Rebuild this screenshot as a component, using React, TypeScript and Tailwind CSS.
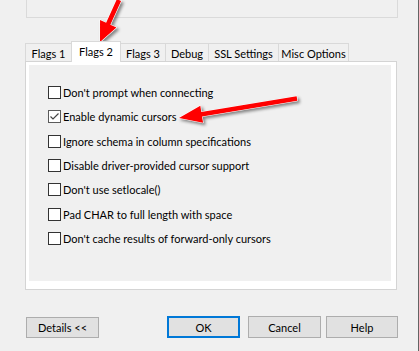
import React from "react";

type Pt = [number, number];

function arrowPoints(T: Pt, P: Pt, s: number, L: number, h: number): string {
  const dx = P[0] - T[0];
  const dy = P[1] - T[1];
  const len = Math.hypot(dx, dy);
  const ux = dx / len;
  const uy = dy / len;
  const nx = -uy;
  const ny = ux;
  const B: Pt = [P[0] - ux * L, P[1] - uy * L];
  const pts: Pt[] = [
    [T[0] + nx * s, T[1] + ny * s],
    [B[0] + nx * s, B[1] + ny * s],
    [B[0] + nx * h, B[1] + ny * h],
    P,
    [B[0] - nx * h, B[1] - ny * h],
    [B[0] - nx * s, B[1] - ny * s],
    [T[0] - nx * s, T[1] - ny * s],
  ];
  return pts.map((p) => `${p[0].toFixed(2)},${p[1].toFixed(2)}`).join(" ");
}

function CheckBox({ checked }: { checked?: boolean }) {
  return (
    <div
      className={
        checked
          ? "w-[13px] h-[13px] border border-[#5a5a5a] bg-white shrink-0 flex items-center justify-center"
          : "w-[13px] h-[13px] border border-[#333333] bg-white shrink-0 flex items-center justify-center"
      }
    >
      {checked && (
        <svg width="11" height="11" viewBox="0 0 11 11">
          <path d="M1.5 5.5 L4 8 L9.5 2.5" fill="none" stroke="#444444" strokeWidth="1.2" />
        </svg>
      )}
    </div>
  );
}

const options: { label: string; checked?: boolean }[] = [
  { label: "Don't prompt when connecting" },
  { label: "Enable dynamic cursors", checked: true },
  { label: "Ignore schema in column specifications" },
  { label: "Disable driver-provided cursor support" },
  { label: "Don't use setlocale()" },
  { label: "Pad CHAR to full length with space" },
  { label: "Don't cache results of forward-only cursors" },
];

export default function App() {
  return (
    <div className="relative w-[419px] h-[351px] bg-[#f0f0f0] overflow-hidden flex font-['Lato',sans-serif] text-[11px] text-black leading-none">
      <div className="flex-1 flex flex-col pl-[25px]">
        {/* top group box remnant */}
        <div className="ml-[1px] w-[372px] h-[18px] border-x border-b border-[#dadada]" />

        {/* tabs */}
        <div className="mt-[23px] h-[20px] flex items-end">
          <div className="w-[47px] h-[18px] border-x border-t border-[#d9d9d9] bg-[#f0f0f0] flex items-center justify-center pt-[1px]">
            Flags 1
          </div>
          <div className="relative z-10 -ml-[1px] -mb-[1px] w-[50px] h-[21px] border-x border-t border-[#d9d9d9] bg-white flex items-center justify-center pb-[2px]">
            Flags 2
          </div>
          <div className="-ml-[1px] w-[46px] h-[18px] border-x border-t border-[#d9d9d9] bg-[#f0f0f0] flex items-center justify-center pt-[1px]">
            Flags 3
          </div>
          <div className="-ml-[1px] w-[44px] h-[18px] border-x border-t border-[#d9d9d9] bg-[#f0f0f0] flex items-center justify-center pt-[1px]">
            Debug
          </div>
          <div className="-ml-[1px] w-[71px] h-[18px] border-x border-t border-[#d9d9d9] bg-[#f0f0f0] flex items-center justify-center pt-[1px]">
            SSL Settings
          </div>
          <div className="-ml-[1px] w-[71px] h-[18px] border-x border-t border-[#d9d9d9] bg-[#f0f0f0] flex items-center justify-center pt-[1px]">
            Misc Options
          </div>
        </div>

        {/* tab page */}
        <div className="w-[372px] h-[229px] border border-[#d4d4d4] bg-white pl-[3px] pt-[3px] pr-[5px] pb-[8px]">
          <div className="h-full bg-[#f0f0f0] pl-[19px] pt-[21px] flex flex-col gap-[11.33px]">
            {options.map((o) => (
              <div key={o.label} className="flex items-center h-[13px]">
                <CheckBox checked={o.checked} />
                <span className="ml-[2px] whitespace-nowrap">{o.label}</span>
              </div>
            ))}
          </div>
        </div>

        {/* buttons */}
        <div className="mt-[26px] flex items-start">
          <div className="ml-[1px] mt-[1px] w-[73px] h-[21px] border border-[#adadad] bg-[#e1e1e1] flex items-center justify-center">
            Details &lt;&lt;
          </div>
          <div className="ml-[68px] w-[73px] h-[22px] border-2 border-[#0078d7] bg-[#e1e1e1] flex items-center justify-center">
            OK
          </div>
          <div className="ml-[8px] w-[73px] h-[22px] border border-[#adadad] bg-[#e1e1e1] flex items-center justify-center">
            Cancel
          </div>
          <div className="ml-[5px] w-[72px] h-[22px] border border-[#adadad] bg-[#e1e1e1] flex items-center justify-center">
            Help
          </div>
        </div>
      </div>
      <div className="w-[1px] h-full bg-[#646464]" />

      {/* red annotation arrows */}
      <svg
        className="absolute inset-0 pointer-events-none drop-shadow-[2px_2px_1.5px_rgba(0,0,0,0.45)]"
        width="419"
        height="351"
        viewBox="0 0 419 351"
      >
        <polygon
          points={arrowPoints([119, 0], [100, 42], 2.3, 20, 9)}
          fill="#ff0000"
          stroke="#ffffff"
          strokeWidth="1.2"
          strokeLinejoin="round"
          paintOrder="stroke"
        />
        <polygon
          points={arrowPoints([297, 98.5], [179, 118], 2.3, 23, 8.5)}
          fill="#ff0000"
          stroke="#ffffff"
          strokeWidth="1.2"
          strokeLinejoin="round"
          paintOrder="stroke"
        />
      </svg>
    </div>
  );
}
